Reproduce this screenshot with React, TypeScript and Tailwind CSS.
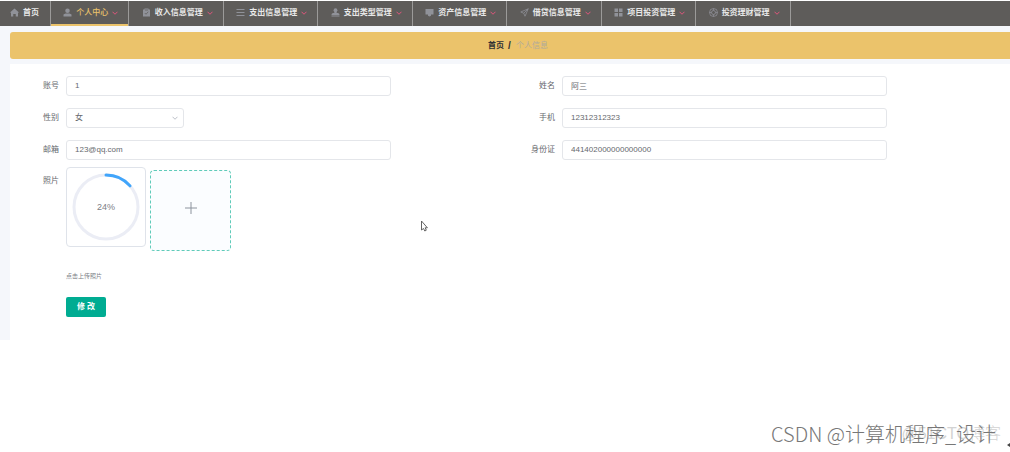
import React, { useState } from 'react';
import clsx from 'clsx';

type IconName = 'home' | 'user' | 'clipboard' | 'list' | 'stamp' | 'monitor' | 'send' | 'grid' | 'ring';

interface MenuItem { label: string; icon: IconName; active?: boolean; }

const MENU: MenuItem[] = [
  { label: '个人中心', icon: 'user', active: true },
  { label: '收入信息管理', icon: 'clipboard' },
  { label: '支出信息管理', icon: 'list' },
  { label: '支出类型管理', icon: 'stamp' },
  { label: '资产信息管理', icon: 'monitor' },
  { label: '借贷信息管理', icon: 'send' },
  { label: '项目投资管理', icon: 'grid' },
  { label: '投资理财管理', icon: 'ring' },
];

const GLYPHS: Record<IconName, React.ReactNode> = {
  home: <path fill="currentColor" d="M9 1 17.500 8.500 16 10v7h-4.500v-5h-5v5H2v-7L.5 8.500z" />,
  user: (
    <g fill="currentColor">
      <circle cx="9" cy="5.500" r="4.500" />
      <path d="M1 17v-3c0-2 2-3 8-3s8 1 8 3v3z" />
    </g>
  ),
  clipboard: (
    <g>
      <path fill="currentColor" d="M2 3h3V1h8v2h3v14H2z" />
      <path d="M5.500 10 8 12.500 12.500 7.500M6 4h6" fill="none" stroke="#5e5c5a" strokeWidth="1.500" />
    </g>
  ),
  list: <path d="M1 3h16M1 9h16M1 15h16" stroke="currentColor" strokeWidth="2" />,
  stamp: (
    <g fill="currentColor">
      <circle cx="9" cy="4.500" r="3.800" />
      <path d="M7 7h4l.5 3c4 0 5.500 1 5.500 4h-16c0-3 1.500-4 5.500-4zM1 15h16v2H1z" />
    </g>
  ),
  monitor: <path fill="currentColor" d="M1 2h16v11h-5v2.500l-3 1.500-3-1.500V13H1z" />,
  send: <path d="M16.500 1.500 1.500 8l6 2.500 2.500 6zM16.500 1.500l-9 9" fill="none" stroke="currentColor" strokeWidth="1.500" />,
  grid: <path fill="currentColor" d="M1 1h7v7H1zM10 1h7v7h-7zM1 10h7v7H1zM10 10h7v7h-7z" />,
  ring: (
    <g fill="none" stroke="currentColor" strokeWidth="1.500">
      <circle cx="9" cy="9" r="8" />
      <circle cx="9" cy="9" r="4" />
      <path d="M9 1v4M9 13v4M1 9h4M13 9h4" />
    </g>
  ),
};

const MenuIcon = ({ name }: { name: IconName }) => (
  <svg viewBox="0 0 18 18" className="size-[9px] shrink-0 text-[#909299]" aria-hidden="true">
    {GLYPHS[name]}
  </svg>
);

const Chevron = ({ className }: { className: string }) => (
  <svg viewBox="0 0 12 8" className={className} fill="none" stroke="currentColor" strokeWidth="2" aria-hidden="true">
    <path d="M1 1.500 6 6.500 11 1.500" />
  </svg>
);

const TopNav = () => (
  <nav className="mt-px bg-[#5e5c5a] h-[25px]">
    <ul className="flex h-full w-[78.3%]">
      <li className="flex border-r border-[#9b9a99]">
        <a href="#home" className="flex items-center gap-1 border-b-2 border-transparent pl-[10px] pr-[11px] font-bold text-[#e8e8e8] whitespace-nowrap">
          <MenuIcon name="home" />
          首页
        </a>
      </li>
      {MENU.map(item => (
        <li key={item.label} className="flex grow border-r border-[#9b9a99]">
          <a
            href="#menu"
            className={clsx(
              'flex grow items-center justify-center gap-1 border-b-2 pl-[2px] whitespace-nowrap',
              item.active ? 'border-[#ebc36b] font-medium text-[#ebc36b]' : 'border-transparent font-bold text-[#e8e8e8]'
            )}
          >
            <MenuIcon name={item.icon} />
            {item.label}
            <Chevron className="w-[6px] h-1 shrink-0 text-[#e0557c]" />
          </a>
        </li>
      ))}
    </ul>
  </nav>
);

interface FieldProps { id: string; label: string; children: React.ReactNode; top?: boolean; }

const Field = ({ id, label, children, top }: FieldProps) => (
  <div className={clsx('flex gap-[7px]', top ? 'items-start' : 'items-center')}>
    <label htmlFor={id} className={clsx('w-[49px] shrink-0 text-right', top && 'pt-2')}>{label}</label>
    {children}
  </div>
);

const TextField = ({ id, label, value }: { id: string; label: string; value: string }) => {
  const [text, setText] = useState(value);
  return (
    <Field id={id} label={label}>
      <input
        id={id}
        value={text}
        onChange={e => setText(e.target.value)}
        className="h-5 w-[65.6%] rounded-[3px] border border-[#e4e6ea] bg-white px-2 pb-px outline-none"
      />
    </Field>
  );
};

const UploadProgress = ({ percent }: { percent: number }) => {
  const length = 2 * Math.PI * 32;
  return (
    <div className="relative flex size-[80px] items-center justify-center rounded-[4px] border border-[#dfe3ea] bg-white">
      <svg viewBox="0 0 70 70" className="size-[70px]" fill="none" strokeWidth="3" aria-hidden="true">
        <circle cx="35" cy="35" r="32" stroke="#ebedf5" />
        <circle
          cx="35"
          cy="35"
          r="32"
          stroke="#41a5fb"
          strokeLinecap="round"
          strokeDasharray={`${length * 0.135} ${length}`}
          transform="rotate(-90 35 35)"
        />
      </svg>
      <span className="absolute text-[9px] text-[#7d8086]">{percent}%</span>
    </div>
  );
};

export default function App() {
  const [gender, setGender] = useState('女');

  return (
    <div className="relative min-h-screen overflow-hidden bg-white text-[8px] leading-[12px] text-[#66696e] font-['Liberation_Sans','Noto_Sans_CJK_SC',sans-serif]">
      <TopNav />

      <main className="bg-[#f5f7fb] pl-[10px] pt-[6px]">
        <div className="flex h-[27px] items-center justify-center gap-1 rounded-l-[3px] bg-[#ebc36b] pl-4">
          <a href="#home" className="font-bold text-[#303133]">首页</a>
          <span className="text-[10px] font-bold text-[#303133]">/</span>
          <span className="pl-px text-[#b0aa9c]">个人信息</span>
        </div>

        <form className="mt-[5px] bg-white pt-3 pb-[23px] pr-2" onSubmit={e => e.preventDefault()}>
          <div className="grid grid-cols-2 gap-y-[12px]">
            <TextField id="account" label="账号" value="1" />
            <TextField id="name" label="姓名" value="阿三" />
            <Field id="gender" label="性别">
              <div className="relative">
                <select
                  id="gender"
                  value={gender}
                  onChange={e => setGender(e.target.value)}
                  className="block h-5 w-[118px] appearance-none rounded-[3px] border border-[#e4e6ea] bg-white px-2 outline-none"
                >
                  <option>女</option>
                  <option>男</option>
                </select>
                <Chevron className="pointer-events-none absolute right-[6px] top-2 h-1 w-[6px] text-[#bcc0c8]" />
              </div>
            </Field>
            <TextField id="phone" label="手机" value="12312312323" />
            <TextField id="email" label="邮箱" value="123@qq.com" />
            <TextField id="idcard" label="身份证" value="441402000000000000" />
          </div>

          <div className="mt-[7px]">
            <Field id="photo" label="照片" top>
              <div>
                <div className="flex gap-1">
                  <UploadProgress percent={24} />
                  <button
                    id="photo"
                    type="button"
                    aria-label="点击上传照片"
                    className="mt-[3px] flex size-[81px] items-center justify-center rounded-[4px] border border-dashed border-[#5fcbb9] bg-[#fbfdff] pb-[6px]"
                  >
                    <svg viewBox="0 0 14 14" className="size-[14px]" stroke="#8c939d" aria-hidden="true">
                      <path d="M7 1v12M1 7h12" />
                    </svg>
                  </button>
                </div>
                <p className="mt-[19px] text-[6px] text-[#7c8086]">点击上传照片</p>
                <button type="submit" className="mt-[15px] h-5 w-10 rounded-[2px] bg-[#00ac92] font-bold text-white">
                  修 改
                </button>
              </div>
            </Field>
          </div>
        </form>
      </main>

      {/* mouse pointer */}
      <svg viewBox="0 0 8 12" className="absolute left-[420px] top-[220px] h-3 w-2" aria-hidden="true">
        <path d="M1.500 1v9l2-1.500 1.300 2.500 1.500-.8-1.200-2.400h2.300z" fill="#fff" stroke="#555" strokeWidth=".9" />
      </svg>

      <div className="absolute bottom-2 right-[9px] whitespace-nowrap text-[16px] leading-[20px] font-light text-[#d3d3d3]">@51CTO博客</div>
      <div className="absolute bottom-1 right-[14px] whitespace-nowrap text-[20px] leading-[28px] font-light text-[#777] font-['Noto_Sans_CJK_SC',sans-serif]">
        CSDN @计算机程序_设计
      </div>
      <svg viewBox="0 0 3 4" className="absolute bottom-[5px] right-0 h-1 w-[3px]" aria-hidden="true">
        <path d="M0 2 3 0v4z" fill="#444" />
      </svg>
    </div>
  );
}
